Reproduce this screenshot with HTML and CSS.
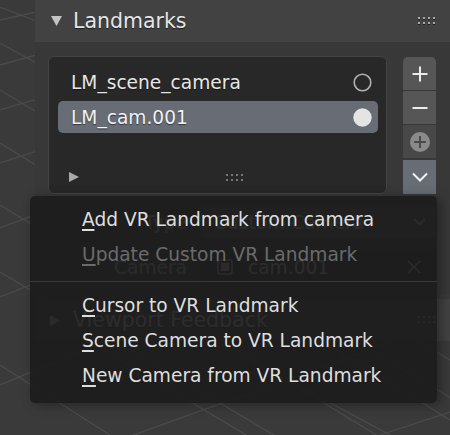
FILE: index.html
```html
<!DOCTYPE html>
<html>
<head>
<meta charset="utf-8">
<link rel="stylesheet" href="styles.css">
</head>
<body>
<svg class="viewport" width="450" height="435" viewBox="0 0 450 435">
  <g stroke="#4b4b4b" stroke-width="1.3" fill="none">
    <line x1="0" y1="7" x2="450" y2="180"/>
    <line x1="0" y1="43" x2="450" y2="290"/>
    <line x1="0" y1="90" x2="450" y2="360"/>
    <line x1="0" y1="143" x2="450" y2="420"/>
    <line x1="0" y1="205" x2="450" y2="480"/>
    <line x1="0" y1="272" x2="450" y2="540"/>
    <line x1="0" y1="365" x2="110" y2="435"/>
    <line x1="100" y1="348" x2="300" y2="467"/>
    <line x1="250" y1="360" x2="450" y2="467"/>
    <line x1="350" y1="338" x2="480" y2="415"/>
    <line x1="0" y1="20" x2="450" y2="-80"/>
    <line x1="0" y1="65" x2="450" y2="-60"/>
    <line x1="0" y1="110" x2="450" y2="-20"/>
    <line x1="0" y1="163" x2="450" y2="20"/>
    <line x1="0" y1="228" x2="450" y2="60"/>
    <line x1="0" y1="297" x2="450" y2="120"/>
    <line x1="0" y1="385" x2="450" y2="200"/>
    <line x1="0" y1="483" x2="450" y2="321"/>
    <line x1="380" y1="435" x2="450" y2="412"/>
  </g>
</svg>

<div class="sidebar">
  <section class="panel">
    <div class="panel-header">
      <svg class="disclosure" width="11" height="10" viewBox="0 0 11 10"><path d="M0 0H11L5.5 10Z" fill="#c4c4c4"/></svg>
      <span class="panel-title">Landmarks</span>
      <svg class="grip" width="18" height="8" viewBox="0 0 18 8">
        <g fill="#1e1e1e"><rect x="0" y="2" width="2" height="1"/><rect x="5" y="2" width="2" height="1"/><rect x="10" y="2" width="2" height="1"/><rect x="15" y="2" width="2" height="1"/><rect x="0" y="7" width="2" height="1"/><rect x="5" y="7" width="2" height="1"/><rect x="10" y="7" width="2" height="1"/><rect x="15" y="7" width="2" height="1"/></g>
        <g fill="#a8a8a8"><rect x="0" y="0" width="2" height="2"/><rect x="5" y="0" width="2" height="2"/><rect x="10" y="0" width="2" height="2"/><rect x="15" y="0" width="2" height="2"/><rect x="0" y="5" width="2" height="2"/><rect x="5" y="5" width="2" height="2"/><rect x="10" y="5" width="2" height="2"/><rect x="15" y="5" width="2" height="2"/></g>
      </svg>
    </div>
    <div class="panel-body">
      <div class="list-row">
        <div class="list-box">
          <div class="list-item">
            <span>LM_scene_camera</span>
            <svg width="19" height="19" viewBox="0 0 19 19"><circle cx="9.5" cy="9.5" r="8.3" fill="none" stroke="#b2b2b2" stroke-width="1.6"/></svg>
          </div>
          <div class="list-item active">
            <span>LM_cam.001</span>
            <svg width="19" height="19" viewBox="0 0 19 19"><circle cx="9.5" cy="9.5" r="9.2" fill="#e4e4e4"/></svg>
          </div>
          <div class="list-footer">
            <svg width="10" height="10" viewBox="0 0 10 10"><path d="M0 0L10 5L0 10Z" fill="#a9a9a9"/></svg>
            <svg class="list-grip" width="18" height="7" viewBox="0 0 18 7">
              <g fill="#777"><rect x="0" y="0" width="2" height="2"/><rect x="5" y="0" width="2" height="2"/><rect x="10" y="0" width="2" height="2"/><rect x="15" y="0" width="2" height="2"/><rect x="0" y="5" width="2" height="2"/><rect x="5" y="5" width="2" height="2"/><rect x="10" y="5" width="2" height="2"/><rect x="15" y="5" width="2" height="2"/></g>
            </svg>
          </div>
        </div>
        <div class="list-buttons">
          <div class="lbtn first">
            <svg width="16" height="16" viewBox="0 0 16 16"><path d="M8 0.5V15.5M0.5 8H15.5" stroke="#ececec" stroke-width="2"/></svg>
          </div>
          <div class="lbtn">
            <svg width="16" height="16" viewBox="0 0 16 16"><path d="M0.5 8H15.5" stroke="#ececec" stroke-width="2"/></svg>
          </div>
          <div class="lbtn dim">
            <svg width="20" height="20" viewBox="0 0 20 20"><circle cx="10" cy="10" r="10" fill="#8a8a8a"/><path d="M10 4V16M4 10H16" stroke="#4a4a4a" stroke-width="2"/></svg>
          </div>
          <div class="lbtn hot">
            <svg width="16" height="10" viewBox="0 0 16 10"><path d="M1 1.5L8 8.5L15 1.5" fill="none" stroke="#f0f0f0" stroke-width="2"/></svg>
          </div>
        </div>
      </div>
      <div class="prop-row">
        <span class="prop-label">Type</span>
        <div class="field dropdown">
          <span>Custom Camera</span>
          <svg width="13" height="8" viewBox="0 0 13 8"><path d="M1 1L6.5 6.5L12 1" fill="none" stroke="#d0d0d0" stroke-width="1.8"/></svg>
        </div>
      </div>
      <div class="prop-row second">
        <span class="prop-label">Camera</span>
        <div class="field textfield">
          <svg class="obj-icon" width="16" height="16" viewBox="0 0 16 16"><rect x="1" y="1" width="14" height="14" rx="2" fill="none" stroke="#d0d0d0" stroke-width="1.6"/><rect x="4" y="4" width="8" height="8" fill="#d0d0d0"/></svg>
          <span class="field-text">cam.001</span>
          <svg class="clear" width="14" height="14" viewBox="0 0 14 14"><path d="M1 1L13 13M13 1L1 13" stroke="#c8c8c8" stroke-width="1.6"/></svg>
        </div>
      </div>
    </div>
  </section>
  <section class="panel">
    <div class="panel-header">
      <svg class="disclosure closed" width="10" height="11" viewBox="0 0 10 11"><path d="M0 0L10 5.5L0 11Z" fill="#c4c4c4"/></svg>
      <span class="panel-title">Viewport Feedback</span>
      <svg class="grip" width="18" height="8" viewBox="0 0 18 8">
        <g fill="#a8a8a8"><rect x="0" y="0" width="2" height="2"/><rect x="5" y="0" width="2" height="2"/><rect x="10" y="0" width="2" height="2"/><rect x="15" y="0" width="2" height="2"/><rect x="0" y="5" width="2" height="2"/><rect x="5" y="5" width="2" height="2"/><rect x="10" y="5" width="2" height="2"/><rect x="15" y="5" width="2" height="2"/></g>
      </svg>
    </div>
  </section>
</div>

<div class="menu">
  <div class="menu-item"><span class="mn">A</span>dd VR Landmark from camera</div>
  <div class="menu-item disabled"><span class="mn">U</span>pdate Custom VR Landmark</div>
  <div class="menu-sep"></div>
  <div class="menu-item"><span class="mn">C</span>ursor to VR Landmark</div>
  <div class="menu-item"><span class="mn">S</span>cene Camera to VR Landmark</div>
  <div class="menu-item"><span class="mn">N</span>ew Camera from VR Landmark</div>
</div>
</body>
</html>
```

FILE: styles.css
```css
* { box-sizing: border-box; }

body {
  margin: 0;
  width: 450px;
  height: 435px;
  position: relative;
  overflow: hidden;
  background: #3a3a3a;
  font-family: "DejaVu Sans", sans-serif;
  color: #e6e6e6;
}

.viewport {
  position: absolute;
  left: 0;
  top: 0;
}

.sidebar {
  position: relative;
  margin-left: 35px;
  width: 415px;
  display: flex;
  flex-direction: column;
  gap: 4px;
}

.panel-header {
  height: 42px;
  background: #424242;
  display: flex;
  align-items: center;
  padding: 0 14px 0 16px;
}

.disclosure { flex: none; margin-right: 11px; }
.disclosure.closed { margin-left: -1px; margin-right: 13px; }

.panel-title {
  font-size: 20.5px;
  color: #e6e6e6;
  text-shadow: 0 1px 1px rgba(0, 0, 0, 0.55);
  white-space: nowrap;
}

.grip { margin-left: auto; flex: none; }

.panel-body {
  background: #383838;
  padding: 14px 14px 12px 13px;
}

.list-row {
  display: flex;
  gap: 16px;
  align-items: flex-start;
}

.list-box {
  width: 339px;
  height: 138px;
  border: 1px solid #434343;
  border-radius: 6px;
  background: #282828;
  padding: 9px 8px 0 9px;
  display: flex;
  flex-direction: column;
  gap: 3px;
}

.list-item {
  height: 32px;
  border-radius: 5px;
  display: flex;
  align-items: center;
  justify-content: space-between;
  padding: 0 6px 0 13px;
  font-size: 18.6px;
  color: #e6e6e6;
  text-shadow: 0 1px 1px rgba(0, 0, 0, 0.5);
  white-space: nowrap;
}

.list-item.active { background: #676c75; color: #f2f2f2; }

.list-footer {
  margin-top: auto;
  height: 24px;
  margin-bottom: 4px;
  display: flex;
  align-items: center;
  padding-left: 11px;
}

.list-grip { margin-left: 147px; }

.list-buttons {
  width: 33px;
  margin-top: 1px;
  display: flex;
  flex-direction: column;
  gap: 1px;
}

.lbtn {
  height: 33px;
  background: #565656;
  display: flex;
  align-items: center;
  justify-content: center;
}

.lbtn.first { border-radius: 5px 5px 0 0; }
.lbtn.dim { background: #484848; }
.lbtn.hot { background: #676c75; height: 34px; margin-top: 1px; }

.prop-row {
  height: 32px;
  margin-top: 12px;
  display: flex;
  align-items: center;
  font-size: 18.6px;
}

.prop-row.second { margin-top: 13px; }

.prop-label {
  width: 139px;
  text-align: right;
  color: #cfcfcf;
  white-space: nowrap;
}

.field {
  flex: 1;
  height: 32px;
  margin-left: 13px;
  border-radius: 5px;
  display: flex;
  align-items: center;
  padding: 0 10px 0 14px;
  white-space: nowrap;
  color: #e6e6e6;
}

.dropdown { background: #545454; justify-content: space-between; }
.textfield { background: #282828; }
.obj-icon { margin-left: 3px; margin-right: 15px; }
.clear { margin-left: auto; margin-right: 5px; }

.menu {
  position: absolute;
  left: 30px;
  top: 196px;
  width: 407px;
  height: 207px;
  background: rgba(28, 28, 28, 0.92);
  border-radius: 5px;
  padding: 6px 0 10px;
  box-shadow: 4px 2px 12px rgba(0, 0, 0, 0.35);
}

.menu-item {
  height: 35px;
  line-height: 35px;
  padding-left: 52px;
  font-size: 18.6px;
  color: #dedede;
  white-space: nowrap;
}

.menu-item.disabled { color: #6b6b6b; }

.mn {
  text-decoration: underline;
  text-decoration-thickness: 1.5px;
  text-underline-offset: 3px;
}

.menu-sep {
  height: 1px;
  background: #393939;
  margin: 9px 0 6px;
}
```
